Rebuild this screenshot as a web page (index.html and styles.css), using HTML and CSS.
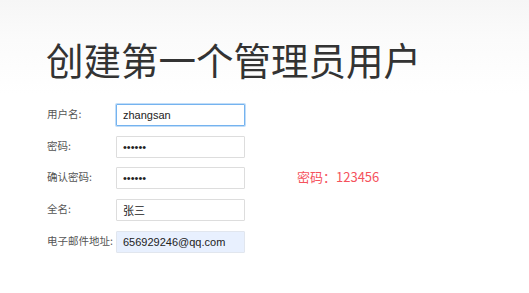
FILE: index.html
```html
<!DOCTYPE html>
<html lang="zh-CN">
<head>
<meta charset="utf-8">
<title>创建第一个管理员用户</title>
<link rel="stylesheet" href="styles.css">
</head>
<body>
<div class="page">
  <h1 class="title">创建第一个管理员用户</h1>
  <div class="form">
    <div class="row">
      <label class="label">用户名:</label>
      <input class="field focused" type="text" value="zhangsan">
    </div>
    <div class="row">
      <label class="label">密码:</label>
      <input class="field" type="password" value="123456">
    </div>
    <div class="row">
      <label class="label">确认密码:</label>
      <input class="field" type="password" value="123456">
      <span class="note">密码：123456</span>
    </div>
    <div class="row">
      <label class="label">全名:</label>
      <input class="field" type="text" value="张三">
    </div>
    <div class="row">
      <label class="label">电子邮件地址:</label>
      <input class="field autofill" type="text" value="656929246@qq.com">
    </div>
  </div>
</div>
</body>
</html>
```
FILE: styles.css
```css
html, body {
  margin: 0;
  padding: 0;
}
body {
  width: 529px;
  height: 293px;
  overflow: hidden;
  background: linear-gradient(to bottom, #f6f6f6 0px, #fbfbfb 40px, #ffffff 95px);
  font-family: "Liberation Sans", "Noto Sans CJK SC", sans-serif;
}
.page {
  padding: 30px 0 0 46px;
}
.title {
  margin: 0;
  font-family: "Noto Sans CJK SC", sans-serif;
  font-weight: 400;
  font-size: 37.5px;
  line-height: 58px;
  color: #333333;
  letter-spacing: 0;
}
.form {
  display: flex;
  flex-direction: column;
  gap: 9.7px;
  margin-top: 16px;
}
.row {
  display: flex;
  align-items: center;
  height: 22px;
}
.label {
  flex: 0 0 69px;
  width: 69px;
  padding-left: 1px;
  box-sizing: border-box;
  white-space: nowrap;
  font-family: "Noto Sans CJK SC", sans-serif;
  font-size: 10.5px;
  color: #555555;
  line-height: 16px;
  margin-top: -2px;
  margin-right: 1px;
}
.field {
  flex: 0 0 auto;
  box-sizing: border-box;
  width: 129px;
  height: 22px;
  margin: 0;
  padding: 0 6px;
  border: 1px solid #dddddd;
  border-radius: 1px;
  background: #ffffff;
  font-family: "Liberation Sans", "Noto Sans CJK SC", sans-serif;
  font-size: 11px;
  color: #222222;
  outline: none;
}
.focused {
  border-color: #75b3ef;
  box-shadow: 0 0 0 1px rgba(117, 179, 239, 0.45);
}
.autofill {
  background: #e8f0fe;
  border-color: #e1e6ee;
}
.note {
  margin-left: 52px;
  white-space: nowrap;
  font-family: "Noto Sans CJK SC", sans-serif;
  font-size: 13px;
  color: #f5525c;
  margin-top: -3px;
}
```
